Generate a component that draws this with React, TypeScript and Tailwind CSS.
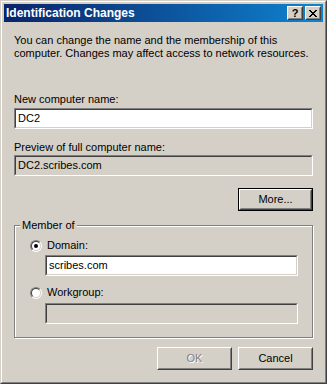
import React from 'react';

const FONT = "font-['Liberation_Sans',Arial,sans-serif]";

function Field({ value, disabled }: { value?: string; disabled?: boolean }) {
  return (
    <div className="h-[21px] border border-t-[#808080] border-l-[#808080] border-r-white border-b-white">
      <div
        className={`h-full flex items-center px-[2px] border border-t-[#404040] border-l-[#404040] border-r-[#d4d0c8] border-b-[#d4d0c8] ${
          disabled ? 'bg-[#d4d0c8]' : 'bg-white'
        }`}
      >
        {value}
      </div>
    </div>
  );
}

function Button({
  children,
  isDefault,
  disabled,
}: {
  children: React.ReactNode;
  isDefault?: boolean;
  disabled?: boolean;
}) {
  const face = (
    <div className="h-full border border-t-white border-l-white border-r-[#404040] border-b-[#404040]">
      <div
        className={`h-full flex items-center justify-center border border-t-[#d4d0c8] border-l-[#d4d0c8] border-r-[#808080] border-b-[#808080] ${
          disabled ? 'text-[#808080] [text-shadow:1px_1px_0_#fff]' : ''
        }`}
      >
        {children}
      </div>
    </div>
  );
  if (isDefault) {
    return <div className="w-[75px] h-[23px] border border-black">{face}</div>;
  }
  return <div className="w-[75px] h-[23px]">{face}</div>;
}

function Radio({ checked }: { checked?: boolean }) {
  return (
    <span className="block w-[12px] h-[12px] rounded-full border border-t-[#808080] border-l-[#808080] border-r-white border-b-white">
      <span className="flex w-full h-full items-center justify-center rounded-full border border-t-[#404040] border-l-[#404040] border-r-[#d4d0c8] border-b-[#d4d0c8] bg-white">
        {checked && <span className="block w-[4px] h-[4px] rounded-full bg-black" />}
      </span>
    </span>
  );
}

function CaptionButton({ children }: { children: React.ReactNode }) {
  return (
    <div className="w-[16px] h-[14px] border border-t-white border-l-white border-r-[#404040] border-b-[#404040] bg-[#d4d0c8]">
      <div className="h-full flex items-center justify-center border border-t-[#d4d0c8] border-l-[#d4d0c8] border-r-[#808080] border-b-[#808080]">
        {children}
      </div>
    </div>
  );
}

export default function App() {
  return (
    <div
      className={`w-[327px] h-[384px] border border-t-[#d4d0c8] border-l-[#d4d0c8] border-r-[#404040] border-b-[#404040] ${FONT} text-[11px] leading-[13px] text-black`}
    >
      <div className="h-full flex flex-col p-[2px] bg-[#d4d0c8] border border-t-white border-l-white border-r-[#808080] border-b-[#808080]">
        {/* title bar */}
        <div className="h-[18px] flex items-center pl-[2px] pr-[2px] bg-linear-to-r from-[#0a246a] to-[#1084d0]">
          <span className="font-bold text-white text-[12px]">Identification Changes</span>
          <div className="ml-auto flex gap-[2px]">
            <CaptionButton>
              <span className="font-bold text-[11px] leading-none">?</span>
            </CaptionButton>
            <CaptionButton>
              <svg width="8" height="7" viewBox="0 0 8 7" shapeRendering="crispEdges">
                <path
                  d="M0 0h2v1H0zM6 0h2v1H6zM1 1h2v1H1zM5 1h2v1H5zM2 2h4v1H2zM3 3h2v1H3zM2 4h4v1H2zM1 5h2v1H1zM5 5h2v1H5zM0 6h2v1H0zM6 6h2v1H6z"
                  fill="#000"
                />
              </svg>
            </CaptionButton>
          </div>
        </div>

        <div className="flex flex-col px-[10px]">
          <p className="mt-[12px]">
            You can change the name and the membership of this
            <br />
            computer. Changes may affect access to network resources.
          </p>

          <label className="mt-[33px]">New computer name:</label>
          <div className="mt-[2px]">
            <Field value="DC2" />
          </div>

          <label className="mt-[12px]">Preview of full computer name:</label>
          <div className="mt-[1px]">
            <Field value="DC2.scribes.com" disabled />
          </div>

          <div className="mt-[12px] flex justify-end">
            <Button isDefault>More...</Button>
          </div>

          {/* group box */}
          <div className="relative mt-[14px] pt-[13px] pb-[13px] pl-[15px] pr-[14px] border border-[#808080] shadow-[inset_1px_1px_0_#fff,1px_1px_0_#fff]">
            <span className="absolute -top-[7px] left-[5px] px-[2px] bg-[#d4d0c8]">Member of</span>
            <div className="flex items-center gap-[5px] h-[13px]">
              <Radio checked />
              <span>Domain:</span>
            </div>
            <div className="mt-[3px] ml-[15px]">
              <Field value="scribes.com" />
            </div>
            <div className="mt-[10px] flex items-center gap-[5px] h-[13px]">
              <Radio />
              <span>Workgroup:</span>
            </div>
            <div className="mt-[4px] ml-[15px]">
              <Field disabled />
            </div>
          </div>

          <div className="mt-[9px] flex justify-end gap-[6px]">
            <Button disabled>OK</Button>
            <Button>Cancel</Button>
          </div>
        </div>
      </div>
    </div>
  );
}
